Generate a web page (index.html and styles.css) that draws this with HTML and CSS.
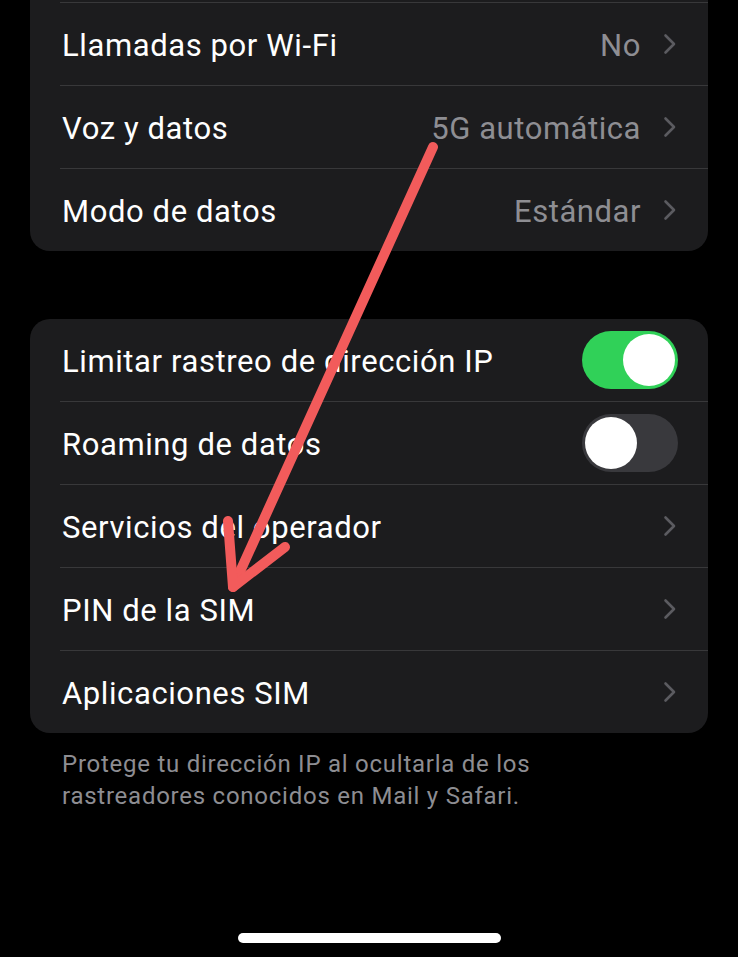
FILE: index.html
```html
<!DOCTYPE html>
<html lang="es">
<head>
	<meta charset="utf-8">
	<title>Datos móviles</title>
	<link rel="stylesheet" href="styles.css">
</head>
<body>
	<div class="screen">
		<div class="group cut">
			<div class="row">
				<span class="label">Llamadas por Wi-Fi</span>
				<span class="value">No</span>
				<svg class="chev" viewBox="0 0 14 22"><path d="M2.5 2.5 L11 11 L2.5 19.5"/></svg>
			</div>
			<div class="row">
				<span class="label">Voz y datos</span>
				<span class="value">5G automática</span>
				<svg class="chev" viewBox="0 0 14 22"><path d="M2.5 2.5 L11 11 L2.5 19.5"/></svg>
			</div>
			<div class="row">
				<span class="label">Modo de datos</span>
				<span class="value">Estándar</span>
				<svg class="chev" viewBox="0 0 14 22"><path d="M2.5 2.5 L11 11 L2.5 19.5"/></svg>
			</div>
		</div>

		<div class="group">
			<div class="row">
				<span class="label">Limitar rastreo de dirección IP</span>
				<span class="switch on"><i></i></span>
			</div>
			<div class="row">
				<span class="label">Roaming de datos</span>
				<span class="switch"><i></i></span>
			</div>
			<div class="row">
				<span class="label">Servicios del operador</span>
				<svg class="chev" viewBox="0 0 14 22"><path d="M2.5 2.5 L11 11 L2.5 19.5"/></svg>
			</div>
			<div class="row">
				<span class="label">PIN de la SIM</span>
				<svg class="chev" viewBox="0 0 14 22"><path d="M2.5 2.5 L11 11 L2.5 19.5"/></svg>
			</div>
			<div class="row">
				<span class="label">Aplicaciones SIM</span>
				<svg class="chev" viewBox="0 0 14 22"><path d="M2.5 2.5 L11 11 L2.5 19.5"/></svg>
			</div>
		</div>
		<p class="footnote">Protege tu dirección IP al ocultarla de los rastreadores conocidos en Mail y Safari.</p>

		<svg class="arrow" viewBox="0 0 738 957">
			<path d="M433 147 L233 587"/>
			<path d="M228 521 L233 587 L285 547"/>
		</svg>
		<div class="home-bar"></div>
	</div>
</body>
</html>
```

FILE: styles.css
```css
html, body{
	margin: 0;
	background: #000;
}
.screen{
	position: relative;
	width: 738px;
	height: 957px;
	overflow: hidden;
	padding: 0 30px;
	box-sizing: border-box;
	font-family: Roboto, "Liberation Sans", sans-serif;
}
.group{
	background: #1c1c1e;
	border-radius: 20px;
	margin-top: 68px;
}
.group.cut{
	margin-top: 0;
	padding-top: 2px;
	border-top-left-radius: 0;
	border-top-right-radius: 0;
}
.row{
	display: flex;
	align-items: center;
	height: 83px;
	box-sizing: border-box;
	margin-left: 30px;
	padding: 0 31px 0 2px;
	border-top: 1px solid #38383a;
}
.group:not(.cut) .row:first-child{
	border-top: none;
	height: 82px;
}
.label{
	flex: 1;
	font-size: 31px;
	letter-spacing: 0.6px;
	color: #fff;
	padding-top: 2px;
}
.value{
	font-size: 31px;
	letter-spacing: 0.55px;
	color: #8e8e93;
	margin-right: 22px;
	padding-top: 2px;
}
.chev{
	width: 14px;
	height: 22px;
	fill: none;
	stroke: #5b5b60;
	stroke-width: 2.6;
	stroke-linecap: round;
	stroke-linejoin: round;
}
.switch{
	position: relative;
	width: 96px;
	height: 58px;
	border-radius: 29px;
	background: #39393d;
	margin-right: -1px;
}
.switch i{
	position: absolute;
	top: 3px;
	left: 3px;
	width: 52px;
	height: 52px;
	border-radius: 50%;
	background: #fff;
}
.switch.on{
	background: #30d158;
}
.switch.on i{
	left: 41px;
}
.footnote{
	margin: 15px 0 0;
	padding: 0 120px 0 32px;
	font-size: 24px;
	letter-spacing: 0.75px;
	line-height: 32px;
	color: #8d8d92;
}
.arrow{
	position: absolute;
	top: 0;
	left: 0;
	width: 738px;
	height: 957px;
	fill: none;
	stroke: #f25b5b;
	stroke-width: 10;
	stroke-linecap: round;
	stroke-linejoin: round;
}
.home-bar{
	position: absolute;
	left: 238px;
	bottom: 14px;
	width: 263px;
	height: 10px;
	border-radius: 5px;
	background: #fff;
}
```
